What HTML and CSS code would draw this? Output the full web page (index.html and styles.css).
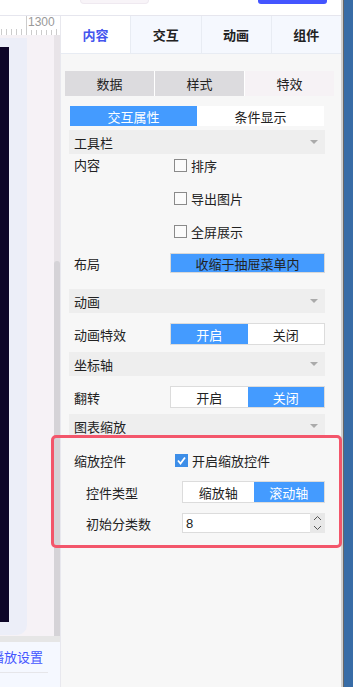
FILE: index.html
```html
<!DOCTYPE html>
<html lang="zh-CN">
<head>
    <meta charset="UTF-8">
    <meta name="viewport" content="width=device-width, initial-scale=1.0">
    <title>图表设置</title>
    <link rel="stylesheet" href="styles.css">
</head>
<body>
    <div class="app">
        <div class="main">
            <div class="topbar">
                <span class="top-box"></span>
                <span class="top-btn"></span>
            </div>
            <div class="work">
                <div class="stage">
                    <div class="ruler"><span class="ruler-num">1300</span></div>
                    <div class="canvas-wrap">
                        <div class="canvas-area">
                            <div class="canvas-glow"><div class="canvas"></div></div>
                        </div>
                        <div class="vscroll"><div class="vthumb"></div></div>
                    </div>
                    <div class="hscroll"></div>
                    <div class="stage-foot">
                        <a class="play-link">播放设置</a>
                        <div class="foot-line"></div>
                    </div>
                </div>

                <div class="panel">
                    <div class="tabs">
                        <div class="tab active">内容</div>
                        <div class="tab">交互</div>
                        <div class="tab">动画</div>
                        <div class="tab">组件</div>
                    </div>

                    <div class="panel-body">
                        <div class="subtabs">
                            <div class="subtab">数据</div>
                            <div class="subtab">样式</div>
                            <div class="subtab current">特效</div>
                        </div>

                        <div class="section">
                            <div class="radio-group">
                                <div class="radio on">交互属性</div>
                                <div class="radio">条件显示</div>
                            </div>

                            <div class="group-head">工具栏<span class="caret"></span></div>
                            <div class="row row-top">
                                <div class="label">内容</div>
                                <div class="check-list">
                                    <label class="check"><span class="box"></span>排序</label>
                                    <label class="check"><span class="box"></span>导出图片</label>
                                    <label class="check"><span class="box"></span>全屏展示</label>
                                </div>
                            </div>
                            <div class="row row-layout">
                                <div class="label">布局</div>
                                <div class="wide-btn">收缩于抽屉菜单内</div>
                            </div>

                            <div class="group-head head-anim">动画<span class="caret"></span></div>
                            <div class="row row-toggle">
                                <div class="label">动画特效</div>
                                <div class="toggle">
                                    <span class="opt on">开启</span>
                                    <span class="opt">关闭</span>
                                </div>
                            </div>

                            <div class="group-head head-axis">坐标轴<span class="caret"></span></div>
                            <div class="row row-toggle">
                                <div class="label">翻转</div>
                                <div class="toggle">
                                    <span class="opt">开启</span>
                                    <span class="opt on">关闭</span>
                                </div>
                            </div>

                            <div class="group-head head-zoom">图表缩放<span class="caret"></span></div>
                            <div class="row row-zoom">
                                <div class="label">缩放控件</div>
                                <label class="check">
                                    <span class="box checked">
                                        <svg width="13" height="13" viewBox="0 0 13 13"><polyline points="3,6.5 5.5,9.5 10,3.5" fill="none" stroke="#fff" stroke-width="1.8"/></svg>
                                    </span>开启缩放控件
                                </label>
                            </div>
                            <div class="row row-sub">
                                <div class="label sub">控件类型</div>
                                <div class="toggle small">
                                    <span class="opt">缩放轴</span>
                                    <span class="opt on">滚动轴</span>
                                </div>
                            </div>
                            <div class="row row-sub">
                                <div class="label sub">初始分类数</div>
                                <div class="number">
                                    <span class="num-val">8</span>
                                    <span class="spin">
                                        <svg width="15" height="20" viewBox="0 0 15 20">
                                            <polyline points="4,7 7.5,3.5 11,7" fill="none" stroke="#555" stroke-width="1"/>
                                            <polyline points="4,13 7.5,16.5 11,13" fill="none" stroke="#555" stroke-width="1"/>
                                        </svg>
                                    </span>
                                </div>
                            </div>
                        </div>
                    </div>

                    <div class="highlight"></div>
                </div>
            </div>
        </div>
        <div class="edge"></div>
    </div>
</body>
</html>
```

FILE: styles.css
```css
body {
    margin: 0;
    font-family: "Noto Sans CJK SC", "Liberation Sans", sans-serif;
    font-size: 13px;
    color: #222;
    background: #f7f7f7;
    overflow: hidden;
}
.app {
    display: flex;
    height: 687px;
}
.main {
    width: 341px;
    display: flex;
    flex-direction: column;
}
.edge {
    flex: 1;
    background: #386ca6;
    border-left: 2px solid #cfcfcf;
    box-shadow: inset 1px 0 0 #666;
}

/* top bar */
.topbar {
    height: 15px;
    border-bottom: 1px solid #e6e6ee;
    background: #fff;
    display: flex;
    align-items: flex-start;
}
.top-box {
    margin-left: 81px;
    width: 67px;
    height: 3px;
    background: #f8f4f8;
    border-radius: 0 0 3px 3px;
    box-shadow: 0 0 0 1px #efe9f0;
}
.top-btn {
    margin-left: 110px;
    width: 69px;
    height: 4px;
    background: #4455ff;
    border-radius: 0 0 3px 3px;
}

.work {
    flex: 1;
    display: flex;
    position: relative;
}

/* left stage */
.stage {
    width: 60px;
    display: flex;
    flex-direction: column;
}
.ruler {
    height: 19px;
    background: #fff repeating-linear-gradient(to right, #ccc 0 1px, transparent 1px 5px) left bottom / 100% 6px no-repeat;
    background-position: 1px 100%;
    display: flex;
}
.ruler-num {
    margin-left: 26px;
    padding-left: 1px;
    border-left: 1px solid #ccc;
    background: #fff;
    height: 14px;
    font-family: "Liberation Sans", sans-serif;
    font-size: 12px;
    line-height: 12px;
    color: #999;
}
.canvas-wrap {
    height: 601px;
    display: flex;
}
.canvas-area {
    flex: 1;
    background: #f6f2f6;
    padding-top: 3px;
}
.canvas-glow {
    width: 27px;
    height: 588px;
    padding-top: 9px;
    background: #eceef8;
    border-radius: 0 0 10px 0;
}
.canvas {
    width: 9px;
    height: 575px;
    background: #0e0628;
}
.vscroll {
    width: 6px;
    background: #e8e4e8;
}
.vthumb {
    margin-top: 226px;
    height: 375px;
    background: #d5d3d7;
    border-radius: 3px 3px 0 0;
}
.hscroll {
    height: 6px;
    background: #e6e6e6;
}
.stage-foot {
    flex: 1;
    background: #f5f8ff;
    overflow: hidden;
    padding-top: 6px;
}
.play-link {
    display: block;
    margin-left: -9px;
    white-space: nowrap;
    color: #4455ff;
    line-height: 18px;
}
.foot-line {
    margin-top: 6px;
    width: 48px;
    height: 1px;
    background: #e6e6ea;
}

/* right panel */
.panel {
    width: 280px;
    border-left: 1px solid #e8e8ee;
    background: #f7f7f7;
}
.tabs {
    display: flex;
    height: 37px;
    border-bottom: 1px solid #e8ecf3;
    background: #f5f8fe;
}
.tab {
    flex: 1;
    display: flex;
    align-items: center;
    justify-content: center;
    font-size: 13px;
    font-weight: bold;
    color: #222;
    border-right: 1px solid #e8ecf3;
}
.tab:last-child {
    border-right: none;
}
.tab.active {
    background: #fff;
    color: #4455ee;
}

.panel-body {
    padding-top: 17px;
}
.subtabs {
    display: flex;
    gap: 1px;
    margin: 0 7px 0 4px;
    height: 25px;
    background: #fff;
}
.subtab {
    flex: 1;
    display: flex;
    align-items: center;
    justify-content: center;
    background: #dcdbde;
}
.subtab.current {
    background: #f6f2f5;
}

.section {
    margin: 0 16px 0 8px;
}
.radio-group {
    display: flex;
    margin: 10px 1px 0;
    height: 20px;
}
.radio {
    flex: 1;
    display: flex;
    align-items: center;
    justify-content: center;
    background: #fff;
}
.radio.on {
    background: #449bff;
    color: #fff;
}

.group-head {
    height: 24px;
    margin-top: 4px;
    padding: 0 7px 0 5px;
    background: #eeeeee;
    display: flex;
    align-items: center;
    justify-content: space-between;
}
.caret {
    width: 0;
    height: 0;
    border-left: 4px solid transparent;
    border-right: 4px solid transparent;
    border-top: 4px solid #aaa;
}
.head-anim { margin-top: 16px; }
.head-axis { margin-top: 7px; }
.head-zoom { margin-top: 6px; }

.row {
    display: flex;
    align-items: center;
    padding-left: 5px;
}
.label {
    width: 96px;
    flex-shrink: 0;
}
.label.sub {
    margin-left: 12px;
}
.row-top {
    align-items: flex-start;
}
.row-top .label {
    line-height: 22px;
}
.check-list {
    display: flex;
    flex-direction: column;
    gap: 11px;
}
.check {
    display: flex;
    align-items: center;
    height: 22px;
    padding-left: 4px;
    gap: 4px;
}
.box {
    width: 11px;
    height: 11px;
    border: 1px solid #8a8a8a;
    background: #fbfbfb;
}
.box.checked {
    width: 13px;
    height: 13px;
    border: none;
    background: #3d8ee8;
}
.box svg {
    display: block;
}
.row-layout {
    margin-top: 11px;
}
.wide-btn {
    width: 153px;
    height: 18px;
    border: 1px solid #d8d8d8;
    background: #449bff;
    display: flex;
    align-items: center;
    justify-content: center;
}
.row-toggle {
    margin-top: 10px;
}
.toggle {
    display: flex;
    width: 153px;
    height: 20px;
    border: 1px solid #dcdcdc;
    background: #fff;
}
.toggle.small {
    width: 141px;
}
.opt {
    flex: 1;
    display: flex;
    align-items: center;
    justify-content: center;
}
.opt.on {
    background: #449bff;
    color: #fff;
}
.row-zoom {
    margin-top: 11px;
}
.row-zoom .check {
    padding-left: 5px;
}
.row-sub {
    margin-top: 10px;
}
.number {
    width: 141px;
    height: 18px;
    border: 1px solid #dcdcdc;
    background: #fff;
    display: flex;
    align-items: center;
    justify-content: space-between;
}
.num-val {
    padding-left: 3px;
    font-family: "Liberation Sans", sans-serif;
}
.spin {
    width: 15px;
    height: 20px;
    margin-right: -1px;
    background: #e8e8e8;
}
.spin svg {
    display: block;
}

/* annotation box over the zoom settings */
.highlight {
    position: absolute;
    left: 51px;
    top: 419px;
    width: 285px;
    height: 107px;
    border: 3px solid #f3566b;
    border-radius: 5px;
    pointer-events: none;
}
```
